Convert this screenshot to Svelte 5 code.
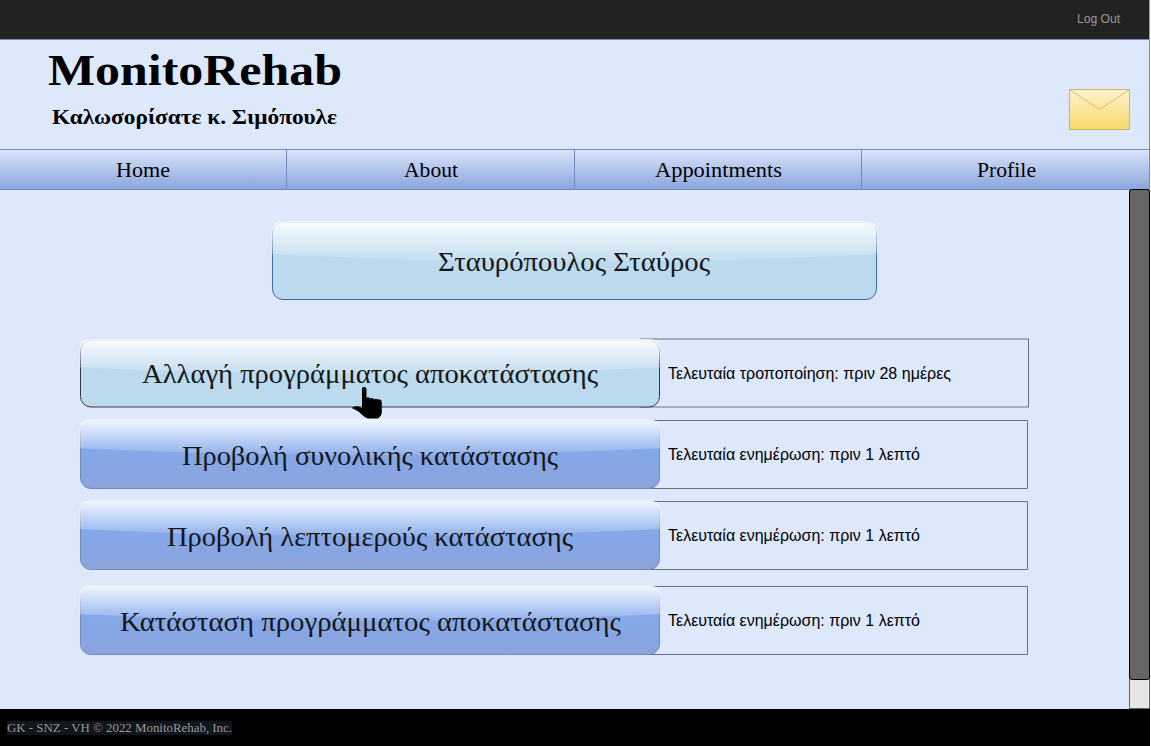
<script>
  const nav = [
    { label: 'Home', width: 54 },
    { label: 'About', width: 54 },
    { label: 'Appointments', width: 127 },
    { label: 'Profile', width: 59 }
  ];
  const rows = [
    { label: 'Αλλαγή προγράμματος αποκατάστασης', width: 456, note: 'Τελευταία τροποποίηση: πριν 28 ημέρες', noteWidth: 283, active: true },
    { label: 'Προβολή συνολικής κατάστασης', width: 376, note: 'Τελευταία ενημέρωση: πριν 1 λεπτό', noteWidth: 252 },
    { label: 'Προβολή λεπτομερούς κατάστασης', width: 406, note: 'Τελευταία ενημέρωση: πριν 1 λεπτό', noteWidth: 252 },
    { label: 'Κατάσταση προγράμματος αποκατάστασης', width: 501, note: 'Τελευταία ενημέρωση: πριν 1 λεπτό', noteWidth: 252, last: true }
  ];
</script>

{#snippet line(text, width, height, base)}
  <svg class="line" {width} {height}><text x="0" y={base} textLength={width} lengthAdjust="spacingAndGlyphs">{text}</text></svg>
{/snippet}

{#snippet glass(id, w, h, fill, stroke, shift = 0)}
  <svg class="glass" width={w + 4} height={h + 4} viewBox="-2 {-2 - shift} {w + 4} {h + 4}">
    <defs>
      <linearGradient id="{id}-fill" x1="0" y1="0" x2="0" y2="1">
        <stop offset="0" stop-color={fill[0]} /><stop offset="1" stop-color={fill[1]} />
      </linearGradient>
      <linearGradient id="{id}-gloss" x1="0" y1="0" x2="0" y2="1">
        <stop offset="0" stop-color="#fff" stop-opacity=".9" /><stop offset="1" stop-color="#fff" stop-opacity=".1" />
      </linearGradient>
    </defs>
    <rect x=".5" y=".5" width={w - 1} height={h - 1} rx="10.5" fill="url(#{id}-fill)" {stroke} />
    <path fill="url(#{id}-gloss)" d="M11 -.4Q-.4 -.4 -.4 11V{h * 0.41}Q{w / 2} {h * 0.61} {w + 0.4} {h * 0.41}V11Q{w + 0.4} -.4 {w - 11} -.4Z" />
  </svg>
{/snippet}

<div class="app">
  <div class="topbar"><a class="logout" href="#logout">{@render line('Log Out', 43, 16, 12)}</a></div>
  <header>
    <div class="brand">
      <h1>{@render line('MonitoRehab', 294, 44, 37.5)}</h1>
      <h2>{@render line('Καλωσορίσατε κ. Σιμόπουλε', 285, 26, 19)}</h2>
    </div>
    <svg class="mail" width="61" height="41" viewBox="0 0 61 41">
      <defs><linearGradient id="mail" x1="0" y1="0" x2="0" y2="1"><stop offset="0" stop-color="#fff2cc" /><stop offset="1" stop-color="#f6d96d" /></linearGradient></defs>
      <rect x=".5" y=".5" width="60" height="40" fill="url(#mail)" stroke="#cfb65c" />
      <path d="M.5 .5L30.5 20.5L60.5 .5" fill="none" stroke="#d6bd65" />
    </svg>
  </header>
  <nav>
    {#each nav as item}
      <a href="#{item.label}">{@render line(item.label, item.width, 28, 21)}</a>
    {/each}
  </nav>
  <div class="body">
    <main>
      <div class="button hero">
        {@render glass('hero', 605, 78, ['#bcdaee', '#bcdaee'], '#3c6e9f')}
        {@render line('Σταυρόπουλος Σταύρος', 272, 40, 29.5)}
      </div>
      {#each rows as row, i}
        <section class="row" class:active={row.active} class:last={row.last}>
          <div class="button">
            {@render glass('row' + i, 580, row.active ? 68 : 69, row.active ? ['#bcdaee', '#bcdaee'] : ['#7eacf4', '#8ba3dc'], row.active ? '#36393d' : '#748bc0', row.active ? 0.5 : 0)}
            {@render line(row.label, row.width, 40, row.active ? 28.5 : 29.5)}
            {#if row.active}
              <svg class="hand" width="30" height="34" viewBox="0 0 30 34">
                <path d="M10 3Q10 1 12 1Q14.5 1 14.5 3.5V12Q16 10.5 18.2 12.5Q20.5 11 22.3 13.4Q24 12 25.5 13.5Q26.5 12.7 29 14Q30 15 29.8 18V27Q29.5 30 26 32.5H16Q12 31 8.5 27.5Q6 24.5 0 22.2Q1 20 6 20.3L10 22Z" />
              </svg>
            {/if}
          </div>
          <div class="note">
            <svg class="frame" width={row.active ? 389 : 380} height="70">
              {#if row.active}
                <path d="M0 1H389M0 69H389" stroke="#68737b" stroke-opacity=".5" stroke-width="2" />
                <path d="M388.5 1V69" stroke="#68737b" />
              {:else}
                <path d="M0 .5H379.5V68.5H0" fill="none" stroke="#68737b" />
              {/if}
            </svg>
            {@render line(row.note, row.noteWidth, 24, 17)}
          </div>
        </section>
      {/each}
    </main>
    <div class="scroll"><div class="thumb"></div></div>
  </div>
  <footer><span>{@render line('GK - SNZ - VH © 2022 MonitoRehab, Inc.', 225, 14, 11)}</span></footer>
</div>

<style>
  :global(body) { background: #fff; }
  .app { width: 1150px; height: 746px; display: flex; flex-direction: column; overflow: hidden; background: #dde8fb; font-family: 'Liberation Serif', serif; color: #000; }
  .line { display: block; overflow: visible; flex: none; }
  .line text { fill: currentColor; }
  a { color: inherit; text-decoration: none; }
  .topbar { height: 39px; flex: none; box-sizing: border-box; padding: 11px 29px 0 0; display: flex; justify-content: flex-end; background: #222; border-right: 1px solid #999; }
  .logout { font: 12px 'Liberation Sans', sans-serif; color: #999; }
  header { height: 110px; flex: none; box-sizing: border-box; padding: 7px 19px 0 48px; display: flex; justify-content: space-between; border-top: 1px solid #748bc0; border-right: 1px solid #748bc0; }
  h1, h2 { margin: 0; font-weight: bold; }
  h1 { font-size: 44px; }
  h2 { font-size: 21.5px; padding: 14px 0 0 4px; }
  .mail { margin-top: 42px; }
  nav { height: 41px; flex: none; box-sizing: border-box; display: grid; grid-template-columns: 287px 288px 287px 288px; border: solid #748bc0; border-width: 1px 0; background: linear-gradient(#dae4f9, #8ba5dd); }
  nav a { display: flex; justify-content: center; padding-top: 6px; font-size: 21px; border-right: 1px solid #748bc0; }
  nav a:last-child { padding-left: 1px; }
  .body { height: 519px; flex: none; display: flex; }
  main { width: 1129px; display: flex; flex-direction: column; }
  .button { position: relative; display: flex; align-items: center; justify-content: center; color: #171717; font-size: 28px; }
  .button > .line { position: relative; }
  .glass { position: absolute; left: -2px; top: -2px; }
  .hero { width: 605px; height: 78px; margin: 32px 0 39px 272px; }
  .hero > .line { left: -0.5px; }
  .row { width: 948px; height: 69px; margin: 0 0 12px 80px; display: grid; grid-template-columns: 580px 1fr; }
  .row.last { margin-top: 4px; }
  .row .button { z-index: 1; height: 69px; }
  .hand { position: absolute; left: 272px; top: 47px; }
  .note { position: relative; box-sizing: border-box; padding: 23px 0 0 8px; font: 16px 'Liberation Sans', sans-serif; }
  .frame { position: absolute; left: -12px; top: 0; }
  .active .frame { left: -20px; top: -1px; }
  .scroll { width: 21px; box-sizing: border-box; background: #e6e6e6; border: 1px solid #666; }
  .thumb { position: relative; top: -1px; width: 21px; height: 491px; margin: -1px; box-sizing: border-box; border: 1px solid #000; border-radius: 3px; background: #666; }
  footer { flex: 1; display: flex; align-items: flex-start; padding: 12px 0 0 7px; background: #000; }
  footer span { color: #999; background: #10151e; font-size: 12.5px; }
</style>
